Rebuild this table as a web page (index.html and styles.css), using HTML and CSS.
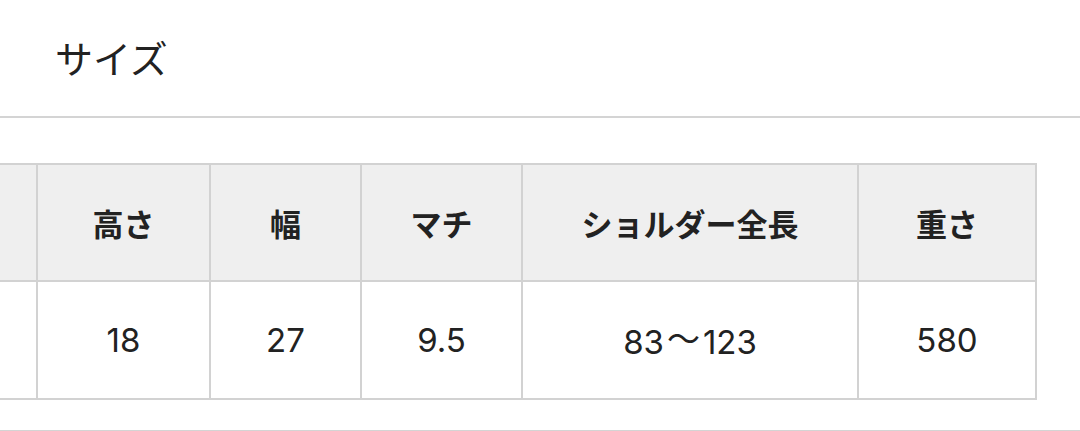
FILE: index.html
```html
<!DOCTYPE html>
<html lang="ja">
<head>
<meta charset="utf-8">
<link rel="stylesheet" href="styles.css">
</head>
<body>
<div class="page">
  <header class="section-head">
    <h2 class="section-title">サイズ</h2>
  </header>
  <div class="table-wrap">
    <table class="size-table">
      <thead>
        <tr>
          <th class="c0"></th>
          <th class="c1">高さ</th>
          <th class="c2">幅</th>
          <th class="c3">マチ</th>
          <th class="c4">ショルダー全長</th>
          <th class="c5">重さ</th>
        </tr>
      </thead>
      <tbody>
        <tr>
          <td class="c0"></td>
          <td>18</td>
          <td>27</td>
          <td>9.5</td>
          <td>83<span class="range">～</span>123</td>
          <td>580</td>
        </tr>
      </tbody>
    </table>
  </div>
</div>
</body>
</html>
```

FILE: styles.css
```css
html, body {
  margin: 0;
  padding: 0;
  background: #ffffff;
  overflow: hidden;
}

.page {
  width: 1080px;
  font-family: "Noto Sans CJK JP", "Noto Sans", sans-serif;
  color: #222222;
}

.section-head {
  height: 118px;
  box-sizing: border-box;
  padding: 34px 0 0 55px;
  border-bottom: 2px solid #d4d4d4;
}

.section-title {
  margin: 0;
  font-size: 38px;
  line-height: 46px;
  font-weight: 400;
  color: #222222;
}

.table-wrap {
  padding-top: 45px;
  padding-bottom: 30px;
  border-bottom: 2px solid #d4d4d4;
}

.size-table {
  table-layout: fixed;
  border-collapse: separate;
  border-spacing: 0;
  margin-left: -114px;
  width: 1151px;
  border-top: 2px solid #d2d2d2;
  border-left: 2px solid #d2d2d2;
}

.size-table th,
.size-table td {
  box-sizing: border-box;
  border-right: 2px solid #d2d2d2;
  border-bottom: 2px solid #d2d2d2;
  text-align: center;
  vertical-align: middle;
  padding: 0;
}

.size-table th {
  height: 117px;
  background: #efefef;
  font-size: 31px;
  font-weight: 700;
  color: #222222;
}

.size-table td {
  height: 118px;
  background: #ffffff;
  font-family: "Inter", "Noto Sans CJK JP", sans-serif;
  font-size: 33px;
  font-weight: 400;
  color: #222222;
}

.size-table .range {
  display: inline-block;
  margin: 0 3px;
  position: relative;
  top: -3px;
}

.size-table .c0 { width: 150px; }
.size-table .c1 { width: 173px; }
.size-table .c2 { width: 151px; }
.size-table .c3 { width: 161px; }
.size-table .c4 { width: 336px; }
.size-table .c5 { width: 178px; }
```
